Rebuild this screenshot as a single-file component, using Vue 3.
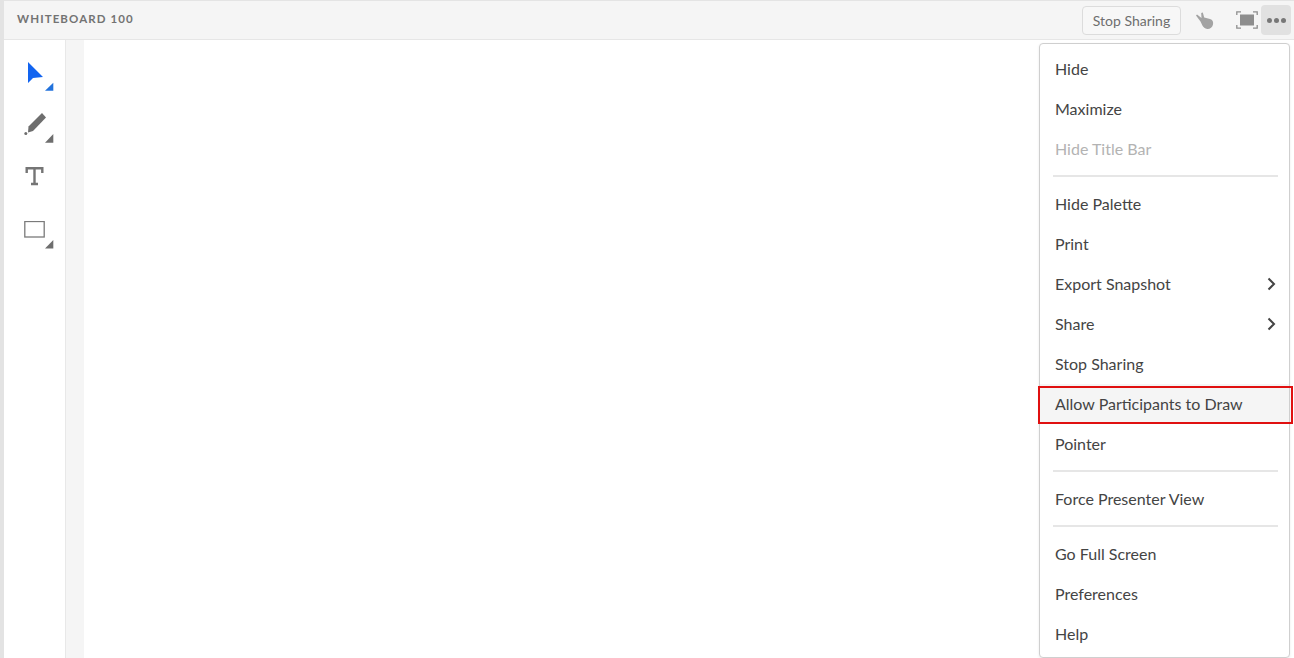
<script setup>
const groups = [
  [{ t: 'Hide' }, { t: 'Maximize' }, { t: 'Hide Title Bar', off: true }],
  [{ t: 'Hide Palette' }, { t: 'Print' }, { t: 'Export Snapshot', sub: true }, { t: 'Share', sub: true }, { t: 'Stop Sharing' }, { t: 'Allow Participants to Draw', hl: true }, { t: 'Pointer' }],
  [{ t: 'Force Presenter View' }],
  [{ t: 'Go Full Screen' }, { t: 'Preferences' }, { t: 'Help' }]
]
</script>

<template>
  <div class="page">
    <header class="bar">
      <div class="title">WHITEBOARD 100</div>
      <div class="actions">
        <button class="stop">Stop Sharing</button>
        <svg class="hand" width="20" height="18" viewBox="0 0 20 18"><path d="M1 3.500 2 2.600 6.500 6 6.200 1 7.800.6 9.200 5.500 15 7c2.600.8 3.600 3 3 5.600-.7 3-3 4.600-5.800 4.400-2.400-.2-3.700-1.500-4.800-3.400L5.500 9.500z" fill="#a3a3a3"/></svg>
        <svg class="frame" width="22" height="18" viewBox="0 0 22 18"><rect x="4" y="3.500" width="14" height="11" fill="#8e8e8e"/><path d="M.8 4V.8H5M17 .8h4.200V4M.8 14v3.200H5M17 17.200h4.200V14" fill="none" stroke="#8e8e8e" stroke-width="1.300"/></svg>
        <div class="more"><i></i><i></i><i></i></div>
      </div>
    </header>
    <div class="body">
      <aside class="tools">
        <div class="tool t1">
          <svg width="30" height="30" viewBox="0 0 30 30"><path d="M4 0 19 15 9 16 4 21z" fill="#1264f0"/><path d="M29.300 20.700v8H21z" fill="#2272dc"/></svg>
        </div>
        <div class="tool t2">
          <svg width="30" height="30" viewBox="0 0 30 30"><path d="M18 0 22 4.500 9 18 4 19.500 4.500 13.500z" fill="#6e6e6e"/><circle cx="1.800" cy="20.500" r="1.500" fill="#6e6e6e"/><path d="M29.300 21v8.700H21z" fill="#6e6e6e"/></svg>
        </div>
        <div class="tool t3">
          <svg width="30" height="30" viewBox="0 0 30 30"><path d="M2.700 6V1.300H18.300V6M10.500 1.300V17M7 17h7" fill="none" stroke="#757575" stroke-width="2.400"/></svg>
        </div>
        <div class="tool t4">
          <svg width="30" height="30" viewBox="0 0 30 30"><rect x=".8" y=".5" width="19.400" height="15.500" fill="none" stroke="#7a7a7a" stroke-width="1.300"/><path d="M29.300 19v8.500H21z" fill="#6e6e6e"/></svg>
        </div>
      </aside>
      <div class="gutter"></div>
      <main class="canvas"></main>
    </div>
    <nav class="menu">
      <div v-for="(g, i) in groups" :key="i" class="group">
        <div v-for="item in g" :key="item.t" class="item" :class="{ off: item.off, hl: item.hl }">
          <span>{{ item.t }}</span>
          <svg v-if="item.sub" width="9" height="14" viewBox="0 0 9 14"><path d="M1.500 1.500 7 7l-5.500 5.500" fill="none" stroke="#444" stroke-width="2"/></svg>
        </div>
      </div>
    </nav>
    <div class="callout"></div>
  </div>
</template>

<style>
html, body { margin: 0; overflow: hidden; background: #fff; }
</style>

<style scoped>
.page {
  position: relative;
  width: 1294px;
  height: 658px;
  overflow: hidden;
  background: #fff;
  border-left: 4px solid #e3e3e3;
  box-sizing: border-box;
  font-family: Lato, "Open Sans", sans-serif;
  display: flex;
  flex-direction: column;
}
.bar {
  height: 40px;
  box-sizing: border-box;
  flex: none;
  background: #f5f5f5;
  border-top: 1px solid #e4e4e4;
  border-bottom: 1px solid #e6e6e6;
  display: flex;
  align-items: center;
  justify-content: space-between;
  padding: 0 3px 0 13px;
}
.title {
  font-size: 11.500px;
  font-weight: 700;
  letter-spacing: 1.100px;
  color: #737373;
  margin-top: -3px;
}
.actions { display: flex; align-items: center; }
.stop {
  width: 99px;
  height: 29px;
  padding: 0;
  border: 1px solid #dcdcdc;
  border-radius: 4px;
  background: #f7f7f7;
  color: #6e6e6e;
  font: 14px Lato, sans-serif;
}
.hand { margin-left: 14px; margin-top: 2px; }
.frame { margin-left: 21px; }
.more {
  width: 30px;
  height: 30px;
  margin-left: 3px;
  border-radius: 4px;
  background: #e1e1e1;
  display: flex;
  align-items: center;
  justify-content: center;
  gap: 2px;
}
.more i { width: 5px; height: 5px; border-radius: 50%; background: #777; }
.body { flex: 1; display: flex; min-height: 0; }
.tools {
  width: 62px;
  flex: none;
  box-sizing: border-box;
  border-right: 1px solid #e8e8e8;
  display: flex;
  flex-direction: column;
  padding: 22px 0 0 20px;
}
.tool { height: 30px; }
.t2 { margin-top: 21px; }
.t3 { margin-top: 24px; }
.t4 { margin-top: 24px; }
.tool svg { display: block; }
.gutter { width: 18px; flex: none; background: #f5f5f5; }
.canvas { flex: 1; background: #fff; }
.menu {
  position: absolute;
  left: 1035px;
  top: 43px;
  width: 251px;
  height: 615px;
  box-sizing: border-box;
  background: #fff;
  border: 1px solid #cfcfcf;
  border-radius: 4px;
  box-shadow: 0 1px 3px rgba(0, 0, 0, 0.08);
  padding-top: 5px;
}
.group + .group { margin-top: 15px; position: relative; }
.group + .group::before {
  content: "";
  position: absolute;
  left: 13px;
  right: 11px;
  top: -9px;
  height: 2px;
  background: #e6e6e6;
}
.item {
  height: 40px;
  display: flex;
  align-items: center;
  justify-content: space-between;
  padding: 0 13px 0 15px;
  font-size: 16px;
  color: #444;
}
.item span { margin-bottom: 2px; }
.item.off { color: #b3b3b3; }
.item.hl { background: #f5f5f5; }
.callout {
  position: absolute;
  left: 1034px;
  top: 386px;
  width: 255px;
  height: 38px;
  box-sizing: border-box;
  border: 2px solid #e01010;
}
</style>
